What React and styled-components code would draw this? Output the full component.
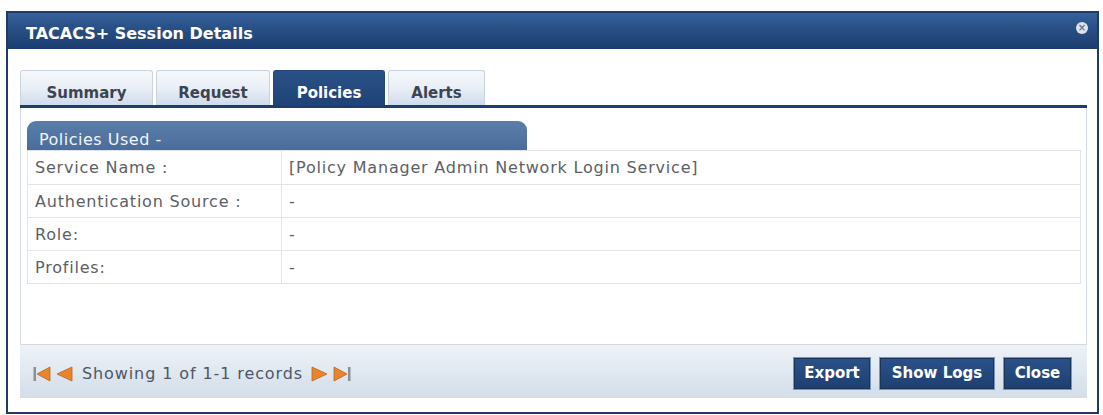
import React from 'react';
import styled, { createGlobalStyle } from 'styled-components';

const GlobalStyle = createGlobalStyle`
  html, body {
    margin: 0;
    padding: 0;
    background: #ffffff;
  }
  body {
    font-family: 'DejaVu Sans', Verdana, sans-serif;
  }
`;

const Page = styled.div`
  padding: 11px 4px 1px 6px;
`;

const Dialog = styled.div`
  width: 1093px;
  height: 403px;
  box-sizing: border-box;
  border: 2px solid #1f3b63;
  background: #fff;
  display: flex;
  flex-direction: column;
`;

const Header = styled.div`
  height: 36px;
  flex: none;
  display: flex;
  align-items: center;
  justify-content: space-between;
  padding: 0 9px 0 18px;
  background: linear-gradient(#35609a 0%, #284f85 45%, #1b3e6f 100%);
`;

const Title = styled.div`
  color: #fff;
  font-weight: bold;
  font-size: 16px;
  padding-top: 5px;
`;

const CloseIcon = styled.div`
  width: 12px;
  height: 12px;
  margin-top: -7px;
  border-radius: 50%;
  background: #dfe4ec;
  display: flex;
  align-items: center;
  justify-content: center;
  color: #5a7397;
  font-size: 10px;
  font-weight: bold;
  line-height: 1;
`;

const Body = styled.div`
  flex: 1;
  padding: 21px 10px 0 12px;
  display: flex;
  flex-direction: column;
`;

const TabBar = styled.div`
  display: flex;
  gap: 3px;
  border-bottom: 3px solid #1d3d6b;
`;

const Tab = styled.div`
  width: ${p => p.$w}px;
  height: 35px;
  box-sizing: border-box;
  display: flex;
  align-items: center;
  justify-content: center;
  padding-top: 9px;
  font-weight: bold;
  font-size: 15px;
  border: 1px solid ${p => (p.$active ? '#23477a' : '#c9d3df')};
  border-bottom: none;
  border-radius: 3px 3px 0 0;
  color: ${p => (p.$active ? '#fff' : '#3c4450')};
  background: ${p =>
    p.$active
      ? 'linear-gradient(#2a5186, #1f4377)'
      : 'linear-gradient(#f6f8fb 0%, #e9eff6 50%, #cfdcec 100%)'};
`;

const Panel = styled.div`
  height: 237px;
  box-sizing: border-box;
  border: 1px solid #d3d9e1;
  border-top: none;
  padding: 13px 5px 0 6px;
`;

const SectionHeader = styled.div`
  width: 500px;
  height: 29px;
  box-sizing: border-box;
  padding: 9px 0 0 12px;
  border-radius: 9px 9px 0 0;
  background: linear-gradient(#5a7ca8, #4a6e9c);
  color: #f2f5f9;
  font-size: 16px;
  letter-spacing: 0.5px;
`;

const Table = styled.div`
  border: 1px solid #dfe4ea;
`;

const Row = styled.div`
  display: grid;
  grid-template-columns: 253px 1fr;
  height: ${p => (p.$first ? 33 : 32)}px;
  border-top: ${p => (p.$first ? 'none' : '1px solid #e1e5ea')};
`;

const Cell = styled.div`
  display: flex;
  align-items: center;
  padding-left: 7px;
  font-size: 16px;
  letter-spacing: 0.8px;
  color: #5c6066;
  & + & {
    border-left: 1px solid #e1e5ea;
  }
`;

const Footer = styled.div`
  height: 53px;
  display: flex;
  align-items: center;
  justify-content: space-between;
  padding: 0 15px 0 13px;
  background: linear-gradient(#eef2f7 0%, #dde6ef 60%, #d3dee9 100%);
`;

const Pager = styled.div`
  display: flex;
  align-items: center;
  gap: 4px;
  font-size: 16px;
  letter-spacing: 0.9px;
  color: #4e5766;
  padding-top: 4px;
`;

const PagerText = styled.span`
  margin: 0 4px 0 5px;
`;

const Buttons = styled.div`
  display: flex;
  gap: 8px;
  padding-top: 3px;
`;

const Button = styled.button`
  width: ${p => p.$w}px;
  height: 33px;
  padding: 0;
  font-family: 'DejaVu Sans', Verdana, sans-serif;
  font-weight: bold;
  font-size: 15px;
  color: #fff;
  background: linear-gradient(#2b5188, #1d4070);
  border: 1px solid #7c96b8;
  box-shadow: inset 0 0 0 1px #1a355c;
  cursor: pointer;
`;

const ORANGE = '#e8842c';
const EDGE = '#b8661f';

// pager arrows: first / prev / next / last
const Arrow = ({ dir, bar }) => (
  <svg width="18" height="16" viewBox="0 0 18 16">
    {dir === 'left' ? (
      <>
        {bar && <rect x="0.5" y="1" width="2.5" height="14" fill="#8a8f96" />}
        <polygon
          points={bar ? '17,1 4,8 17,15' : '17,1 2,8 17,15'}
          fill={ORANGE}
          stroke={EDGE}
          strokeWidth="0.8"
        />
      </>
    ) : (
      <>
        <polygon
          points={bar ? '1,1 14,8 1,15' : '1,1 16,8 1,15'}
          fill={ORANGE}
          stroke={EDGE}
          strokeWidth="0.8"
        />
        {bar && <rect x="15" y="1" width="2.5" height="14" fill="#8a8f96" />}
      </>
    )}
  </svg>
);

const rows = [
  ['Service Name :', '[Policy Manager Admin Network Login Service]'],
  ['Authentication Source :', '-'],
  ['Role:', '-'],
  ['Profiles:', '-'],
];

const tabs = [
  { label: 'Summary', w: 133 },
  { label: 'Request', w: 114 },
  { label: 'Policies', w: 112, active: true },
  { label: 'Alerts', w: 97 },
];

export default function App() {
  return (
    <>
      <GlobalStyle />
      <Page>
        <Dialog>
          <Header>
            <Title>TACACS+ Session Details</Title>
            <CloseIcon>×</CloseIcon>
          </Header>
          <Body>
            <TabBar>
              {tabs.map(t => (
                <Tab key={t.label} $w={t.w} $active={t.active}>
                  {t.label}
                </Tab>
              ))}
            </TabBar>
            <Panel>
              <SectionHeader>Policies Used -</SectionHeader>
              <Table>
                {rows.map(([k, v], i) => (
                  <Row key={k} $first={i === 0}>
                    <Cell>{k}</Cell>
                    <Cell>{v}</Cell>
                  </Row>
                ))}
              </Table>
            </Panel>
            <Footer>
              <Pager>
                <Arrow dir="left" bar />
                <Arrow dir="left" />
                <PagerText>Showing 1 of 1-1 records</PagerText>
                <Arrow dir="right" />
                <Arrow dir="right" bar />
              </Pager>
              <Buttons>
                <Button $w={78}>Export</Button>
                <Button $w={116}>Show Logs</Button>
                <Button $w={69}>Close</Button>
              </Buttons>
            </Footer>
          </Body>
        </Dialog>
      </Page>
    </>
  );
}
